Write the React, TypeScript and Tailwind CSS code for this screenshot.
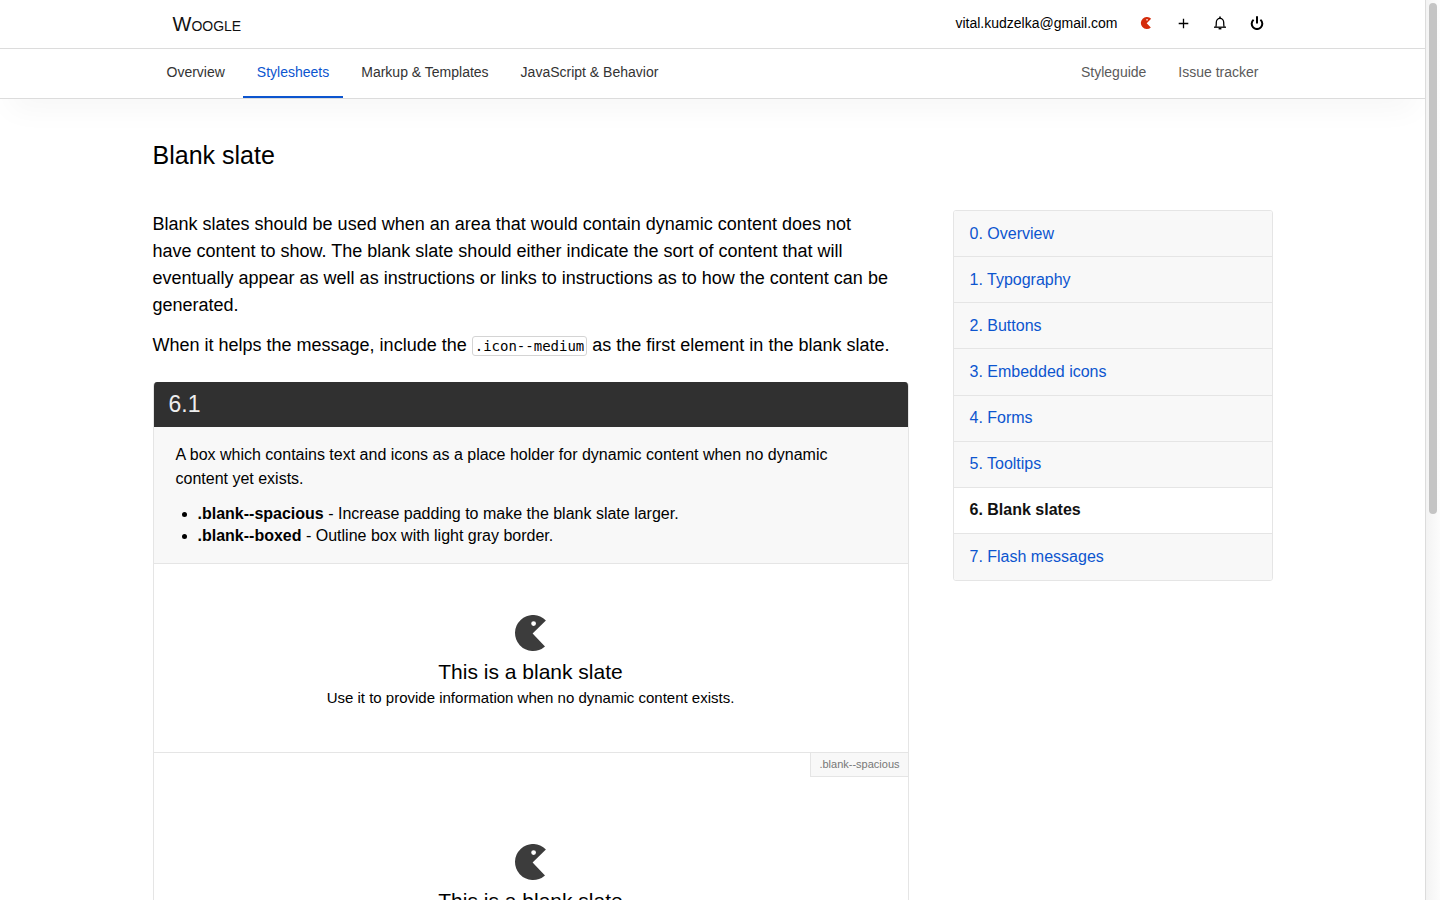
import React from "react";

const sections = [
  "0. Overview",
  "1. Typography",
  "2. Buttons",
  "3. Embedded icons",
  "4. Forms",
  "5. Tooltips",
  "6. Blank slates",
  "7. Flash messages",
];
const currentSection = 6;

const mainLinks = ["Overview", "Stylesheets", "Markup & Templates", "JavaScript & Behavior"];
const sideLinks = ["Styleguide", "Issue tracker"];

function PacmanIcon({ className }: { className: string }) {
  return (
    <svg viewBox="0 0 31 36" className={className} fill="currentColor" aria-hidden="true">
      <path
        fillRule="evenodd"
        d="M30.9 5.4 A18 18 0 1 0 30 31.4 L17.6 18.6 Z M18.6 6.2 a2.4 2.4 0 1 1 0 4.8 a2.4 2.4 0 0 1 0 -4.8 Z"
      />
    </svg>
  );
}

function PlusIcon() {
  return (
    <svg viewBox="0 0 13 13" className="size-[13px]" stroke="currentColor" strokeWidth="1.3" fill="none" aria-hidden="true">
      <path d="M6.5 1.7v9.600M1.700 6.500h9.600" />
    </svg>
  );
}

function BellIcon() {
  return (
    <svg viewBox="0 0 14 14" className="size-3.5" fill="none" stroke="currentColor" strokeWidth="1.3" aria-hidden="true">
      <path d="M2.900 10.900C3.300 9.600 3.300 8.400 3.300 6.600C3.300 4.100 4.700 2.400 7 2.400S10.700 4.100 10.700 6.600C10.700 8.400 10.700 9.600 11.100 10.900" />
      <path d="M1 11.200h12" strokeWidth="1.300" />
      <path d="M7 .6v1.800" strokeWidth="1.600" />
      <path d="M5.600 12.700h2.800" strokeWidth="1.500" />
    </svg>
  );
}

function PowerIcon() {
  return (
    <svg viewBox="0 0 14 14" className="size-3.5" fill="none" stroke="currentColor" strokeWidth="2" aria-hidden="true">
      <path d="M3.600 3.700A5.300 5.300 0 1 0 10.400 3.700" />
      <path d="M7 .3v7.200" />
    </svg>
  );
}

function IconButton({ label, children, className = "" }: { label: string; children: React.ReactNode; className?: string }) {
  return (
    <button type="button" aria-label={label} className={`flex h-8 w-[29px] items-center justify-center ${className}`}>
      {children}
    </button>
  );
}

function BlankSlate({ spacious = false }: { spacious?: boolean }) {
  return (
    <div className={`flex flex-col items-center text-center ${spacious ? "pt-[91px] pb-20" : "pt-[51px] pb-[42px]"}`}>
      <PacmanIcon className="h-9 w-[31px] text-[#3c3c3c]" />
      <h3 className="mt-2 text-[21px] leading-[26px]">This is a blank slate</h3>
      <p className="mt-px text-[15px] leading-6">Use it to provide information when no dynamic content exists.</p>
    </div>
  );
}

function Scrollbar() {
  return (
    <div aria-hidden="true" className="w-[15px] shrink-0 border-l border-[#dcdcdc] bg-linear-to-r from-[#f3f3f3] to-[#fcfcfc] pt-[3px] pl-[3px]">
      <div className="h-[57%] w-2 rounded-full bg-[#c4c4c4]" />
    </div>
  );
}

export default function App() {
  return (
    <div className="flex h-screen overflow-hidden bg-white font-['Liberation_Sans',Arial,sans-serif] text-black">
      <div className="min-w-0 flex-1 overflow-x-hidden overflow-y-auto [scrollbar-width:none]">
        <header className="border-b border-[#dcdcdc]">
          <div className="mx-auto flex h-12 max-w-[1120px] items-center justify-between">
            <a href="#" className="pl-5 text-xl leading-6 text-[#111] [font-variant:small-caps]">Woogle</a>
            <div className="flex items-center gap-2 pr-px pb-0.5 text-sm">
              <a href="#" className="pr-1.5">vital.kudzelka@gmail.com</a>
              <IconButton label="Profile" className="text-[#d42c0c]">
                <PacmanIcon className="h-3 w-3" />
              </IconButton>
              <IconButton label="Add"><PlusIcon /></IconButton>
              <IconButton label="Notifications"><BellIcon /></IconButton>
              <IconButton label="Sign out"><PowerIcon /></IconButton>
            </div>
          </div>
        </header>

        <div className="border-b border-[#dcdcdc] shadow-[0_20px_30px_-10px_rgba(0,0,0,0.04)]">
          <div className="mx-auto flex max-w-[1120px] justify-between text-sm leading-[47px]">
            <nav className="flex gap-1 text-[#333]">
              {mainLinks.map((link) => (
                <a
                  key={link}
                  href="#"
                  className={`border-b-2 px-3.5 ${link === "Stylesheets" ? "border-[#0c55cf] text-[#0c55cf]" : "border-transparent"}`}
                >
                  {link}
                </a>
              ))}
            </nav>
            <nav className="flex gap-1 text-[#5a5a5a]">
              {sideLinks.map((link) => (
                <a key={link} href="#" className="px-3.5">{link}</a>
              ))}
            </nav>
          </div>
        </div>

        <main className="pt-[39px]">
          <div className="mx-auto max-w-[1120px]">
            <h1 className="text-[25px] leading-[34px]">Blank slate</h1>
            <div className="mt-[38px] flex items-start gap-11">
              <div className="min-w-0 flex-1 pt-px">
                <p className="max-w-[740px] text-lg leading-[27px]">
                  Blank slates should be used when an area that would contain dynamic content does not have content to
                  show. The blank slate should either indicate the sort of content that will eventually appear as well
                  as instructions or links to instructions as to how the content can be generated.
                </p>
                <p className="mt-[13px] text-lg leading-[27px]">
                  When it helps the message, include the{" "}
                  <code className="rounded-[3px] border border-[#d4d4d4] px-0.5 py-px font-['DejaVu_Sans_Mono',monospace] text-sm">
                    .icon--medium
                  </code>{" "}
                  as the first element in the blank slate.
                </p>

                <section className="mt-[23px] overflow-hidden rounded-t border-x border-[#e5e5e5]">
                  <h2 className="bg-[#303030] px-[15px] text-[23px] leading-[45px] text-[#eee]">6.1</h2>
                  <div className="border-b border-[#e5e5e5] bg-[#f8f8f8] px-[22px] py-4 text-base">
                    <p className="max-w-[680px] leading-6">
                      A box which contains text and icons as a place holder for dynamic content when no dynamic content
                      yet exists.
                    </p>
                    <ul className="mt-3 list-disc pl-[22px] leading-[22px]">
                      <li><strong>.blank--spacious</strong> - Increase padding to make the blank slate larger.</li>
                      <li><strong>.blank--boxed</strong> - Outline box with light gray border.</li>
                    </ul>
                  </div>
                  <BlankSlate />
                  <div className="relative border-t border-[#e5e5e5]">
                    <span className="absolute top-0 right-0 border-b border-l border-[#e5e5e5] bg-[#f8f8f8] px-2 text-[11px] leading-[23px] text-[#777]">
                      .blank--spacious
                    </span>
                    <BlankSlate spacious />
                  </div>
                </section>
              </div>

              <nav className="w-80 shrink-0">
                <ul className="grid min-h-[371px] auto-rows-fr overflow-hidden rounded-[3px] border border-[#e5e5e5] text-base">
                  {sections.map((name, i) => (
                    <li key={name} className="flex border-b border-[#e5e5e5] last:border-b-0">
                      <a
                        href="#"
                        className={`flex flex-1 items-center px-4 ${i === currentSection ? "bg-white font-bold text-[#111]" : "bg-[#f8f8f8] text-[#0c55cf]"}`}
                      >
                        {name}
                      </a>
                    </li>
                  ))}
                </ul>
              </nav>
            </div>
          </div>
        </main>
      </div>
      <Scrollbar />
    </div>
  );
}
